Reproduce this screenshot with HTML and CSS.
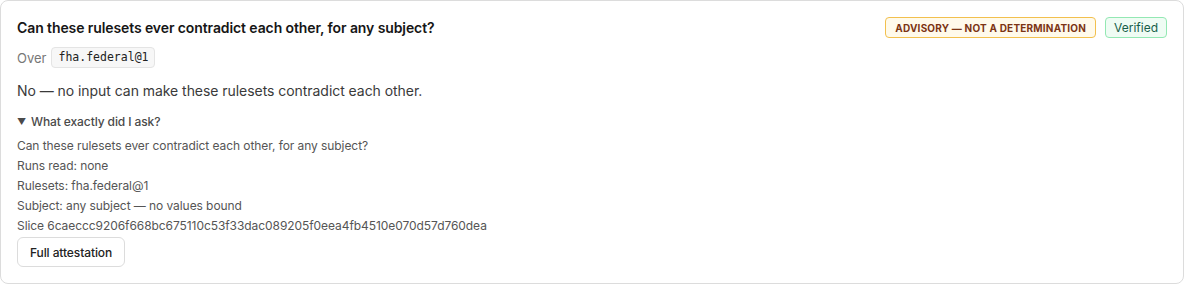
FILE: index.html
```html
<!DOCTYPE html>
<html lang="en">
<head>
<meta charset="utf-8">
<title>Contradiction check</title>
<link rel="stylesheet" href="styles.css">
</head>
<body>
<section class="card">
  <header class="head">
    <h2 class="title">Can these rulesets ever contradict each other, for any subject?</h2>
    <div class="badges">
      <span class="badge advisory">ADVISORY — NOT A DETERMINATION</span>
      <span class="badge verified">Verified</span>
    </div>
  </header>
  <div class="over">
    <span class="over-label">Over</span>
    <code class="chip">fha.federal@1</code>
  </div>
  <p class="answer">No — no input can make these rulesets contradict each other.</p>
  <details class="ask" open>
    <summary><span class="tri">▼</span>What exactly did I ask?</summary>
    <div class="lines">
      <div>Can these rulesets ever contradict each other, for any subject?</div>
      <div>Runs read: none</div>
      <div>Rulesets: fha.federal@1</div>
      <div>Subject: any subject — no values bound</div>
      <div>Slice 6caeccc9206f668bc675110c53f33dac089205f0eea4fb4510e070d57d760dea</div>
    </div>
  </details>
  <button class="btn" type="button">Full attestation</button>
</section>
</body>
</html>
```

FILE: styles.css
```css
* { box-sizing: border-box; }
html, body { margin: 0; padding: 0; background: #ffffff; }
body {
  font-family: Inter, "Noto Sans", "Liberation Sans", sans-serif;
  color: #1f1f1f;
  width: 1184px;
  height: 284px;
}
.card {
  width: 1184px;
  height: 284px;
  border: 1px solid #dcdcdc;
  border-radius: 8px;
  padding: 16px;
  display: flex;
  flex-direction: column;
  align-items: flex-start;
}
.head {
  width: 100%;
  display: flex;
  justify-content: space-between;
  align-items: flex-start;
}
.title {
  margin: 0;
  font-size: 14px;
  line-height: 21px;
  font-weight: 600;
  letter-spacing: -0.1px;
  color: #161616;
}
.badges {
  display: flex;
  gap: 9px;
}
.badge {
  display: inline-flex;
  align-items: center;
  height: 21px;
  border-radius: 4px;
  border: 1px solid;
}
.advisory {
  padding: 0 9px;
  font-size: 10px;
  font-weight: 700;
  letter-spacing: 0.2px;
  color: #7c3414;
  background: #fffaeb;
  border-color: #f2c04e;
}
.verified {
  padding: 0 8px;
  font-size: 12px;
  font-weight: 400;
  color: #17604a;
  background: #effcf4;
  border-color: #93e8b3;
}
.over {
  margin-top: 9px;
  display: flex;
  align-items: center;
  gap: 5px;
}
.over-label {
  font-size: 13px;
  color: #777;
}
.chip {
  font-family: "DejaVu Sans Mono", "Liberation Mono", monospace;
  font-size: 11.5px;
  line-height: 19px;
  padding: 0 6px;
  background: #f7f7f7;
  border: 1px solid #e4e4e4;
  border-radius: 4px;
  color: #222;
}
.answer {
  margin: 12px 0 0;
  font-size: 14px;
  line-height: 22px;
  letter-spacing: -0.05px;
  color: #3a3a3a;
}
.ask {
  margin-top: 10px;
}
.ask summary {
  list-style: none;
  font-size: 12px;
  line-height: 20px;
  font-weight: 500;
  letter-spacing: -0.1px;
  color: #4a4a4a;
  display: flex;
  align-items: center;
}
.ask summary::-webkit-details-marker { display: none; }
.tri {
  font-size: 9px;
  width: 14px;
  color: #4a4a4a;
}
.lines {
  margin-top: 4px;
  font-size: 12px;
  line-height: 20px;
  letter-spacing: -0.07px;
  color: #555;
}
.btn {
  margin-top: 1px;
  font-family: inherit;
  font-size: 12px;
  font-weight: 500;
  letter-spacing: -0.1px;
  color: #222;
  background: #fff;
  border: 1px solid #dcdcdc;
  border-radius: 6px;
  height: 30px;
  padding: 0 12px;
}
```
